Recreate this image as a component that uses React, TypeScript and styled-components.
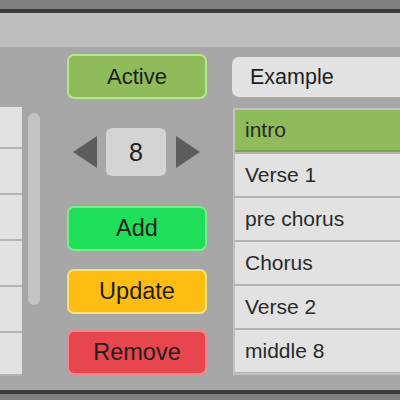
import React from "react";
import styled, { createGlobalStyle } from "styled-components";

const Global = createGlobalStyle`
  html, body { margin: 0; padding: 0; }
  body { width: 400px; height: 400px; overflow: hidden; font-family: "Liberation Sans", Arial, sans-serif; }
  #root { width: 400px; height: 400px; }
`;

const Frame = styled.div`
  width: 400px;
  height: 400px;
  display: flex;
  flex-direction: column;
  background: #7f7f7f;
  overflow: hidden;
`;

const TopEdge = styled.div`
  height: 9px;
  background: #7f7f7f;
  flex: none;
`;

const DarkLine = styled.div`
  height: 4px;
  background: #3b3b3b;
  flex: none;
`;

const Header = styled.div`
  height: 34px;
  background: #bdbdbd;
  flex: none;
`;

const Main = styled.div`
  height: 343px;
  background: #a7a7a7;
  display: flex;
  align-items: flex-start;
  flex: none;
  overflow: hidden;
`;

const BottomEdge = styled.div`
  height: 5px;
  background: #808080;
  flex: none;
`;

const SideList = styled.div`
  width: 22px;
  margin-top: 60px;
  height: 269px;
  display: flex;
  flex-direction: column;
  background: #b3b3b3;
  gap: 2px;
  flex: none;
`;

const SideRow = styled.div<{ $h: number }>`
  height: ${(p) => p.$h}px;
  background: #e2e2e2;
  flex: none;
`;

const ScrollTrack = styled.div`
  width: 12px;
  height: 192px;
  margin-top: 66px;
  margin-left: 6px;
  border-radius: 6px;
  background: #c3c3c3;
  flex: none;
`;

const Controls = styled.div`
  width: 140px;
  margin-left: 27px;
  padding-top: 7px;
  display: flex;
  flex-direction: column;
  flex: none;
`;

const Button = styled.div<{ $bg: string; $border: string; $size?: number; $mt?: number }>`
  box-sizing: border-box;
  height: 45px;
  margin-top: ${(p) => p.$mt ?? 0}px;
  background: ${(p) => p.$bg};
  border: 2px solid ${(p) => p.$border};
  border-radius: 7px;
  display: flex;
  align-items: center;
  justify-content: center;
  font-size: ${(p) => p.$size ?? 23.5}px;
  color: #1e1e1e;
`;

const Stepper = styled.div`
  margin-top: 29px;
  height: 48px;
  display: flex;
  align-items: center;
  padding-left: 6px;
`;

const Arrow = styled.svg`
  width: 24px;
  height: 32px;
  flex: none;
`;

const NumberBox = styled.div`
  width: 60px;
  height: 48px;
  margin: 0 10px 0 9px;
  border-radius: 6px;
  background: #d4d4d4;
  display: flex;
  align-items: center;
  justify-content: center;
  font-size: 25px;
  color: #1e1e1e;
`;

const RightCol = styled.div`
  margin-left: 25px;
  padding-top: 10px;
  flex: 1;
  display: flex;
  flex-direction: column;
`;

const NameBox = styled.div`
  height: 40px;
  margin-right: -10px;
  background: #e2e2e2;
  border-radius: 7px 0 0 7px;
  display: flex;
  align-items: center;
  padding-left: 18px;
  font-size: 21.5px;
  color: #1e1e1e;
`;

const List = styled.div`
  margin-top: 11px;
  margin-left: 1px;
  height: 267px;
  box-sizing: border-box;
  border: 2px solid #c2c2c2;
  border-right: none;
  background: #b3b3b3;
  display: flex;
  flex-direction: column;
  gap: 2px;
`;

const Row = styled.div<{ $active?: boolean }>`
  height: 42px;
  flex: none;
  box-sizing: border-box;
  background: ${(p) => (p.$active ? "#8fbb5b" : "#e2e2e2")};
  border-bottom: ${(p) => (p.$active ? "2px solid #79a54c" : "none")};
  display: flex;
  align-items: center;
  padding-left: 10px;
  font-size: 21px;
  color: #2a2a2a;
`;

const sections = ["intro", "Verse 1", "pre chorus", "Chorus", "Verse 2", "middle 8"];

export default function App() {
  return (
    <>
      <Global />
      <Frame>
        <TopEdge />
        <DarkLine />
        <Header />
        <Main>
          <SideList>
            {[40, 44, 44, 44, 44, 41].map((h, i) => (
              <SideRow key={i} $h={h} />
            ))}
          </SideList>
          <ScrollTrack />
          <Controls>
            <Button $bg="#8fbb5b" $border="#b3e88f" $size={22}>Active</Button>
            <Stepper>
              <Arrow viewBox="0 0 24 32">
                <polygon points="24,0 24,32 0,16" fill="#5c5c5c" />
              </Arrow>
              <NumberBox>8</NumberBox>
              <Arrow viewBox="0 0 24 32">
                <polygon points="0,0 0,32 24,16" fill="#5c5c5c" />
              </Arrow>
            </Stepper>
            <Button $bg="#1ede5a" $border="#80ea8c" $mt={30}>Add</Button>
            <Button $bg="#ffbc12" $border="#f6e27a" $mt={18}>Update</Button>
            <Button $bg="#e8464f" $border="#f2858a" $mt={16}>Remove</Button>
          </Controls>
          <RightCol>
            <NameBox>Example</NameBox>
            <List>
              {sections.map((s, i) => (
                <Row key={s} $active={i === 0}>{s}</Row>
              ))}
            </List>
          </RightCol>
        </Main>
        <DarkLine />
        <BottomEdge />
      </Frame>
    </>
  );
}
